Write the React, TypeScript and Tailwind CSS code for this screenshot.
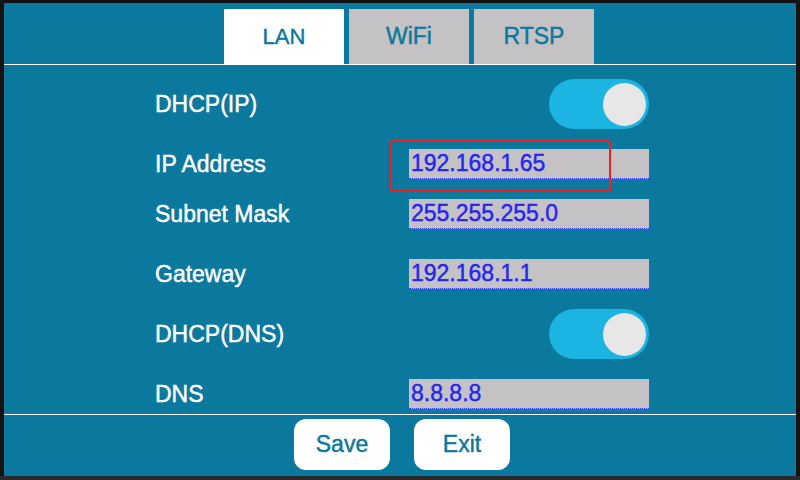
import React from "react";

const TEAL = "bg-[#0b789d]";

function Toggle() {
  return (
    <div className="w-[100px] h-[50px] rounded-full bg-[#1cb4e0] flex items-center justify-end pr-[3px]">
      <div className="w-[43px] h-[43px] rounded-full bg-[#e7e7e7]" />
    </div>
  );
}

function Field({ value }: { value: string }) {
  return (
    <div className="w-[240px] h-[30px] bg-[#c4c2c4] border-b border-dotted border-[#3a3aff] flex items-center pl-[2px] text-[23px] leading-none text-[#2626f0]">
      {value}
    </div>
  );
}

function Row({
  label,
  mt,
  h,
  children,
}: {
  label: string;
  mt: string;
  h: string;
  children: React.ReactNode;
}) {
  return (
    <div className={`flex items-center ${mt} ${h}`}>
      <div className="w-[254px] text-white text-[23px] leading-none">{label}</div>
      {children}
    </div>
  );
}

export default function App() {
  return (
    <div
      className="relative w-[800px] h-[480px] bg-[#121212] pt-[3px] px-[4px] border-b-[4px] border-[#2a2a2a] [-webkit-text-stroke:0.45px]"
      style={{ fontFamily: '"Liberation Sans", Arial, sans-serif' }}
    >
      <div className={`flex flex-col h-full ${TEAL}`}>
        <div className="flex gap-[5px] pl-[220px] pt-[6px]">
          <div className="w-[120px] h-[55px] bg-white flex items-center justify-center text-[#0b789d] text-[22px]">
            LAN
          </div>
          <div className="w-[120px] h-[55px] bg-[#c4c2c4] flex items-center justify-center text-[#0b789d] text-[23px]">
            WiFi
          </div>
          <div className="w-[120px] h-[55px] bg-[#c4c2c4] flex items-center justify-center text-[#0b789d] text-[23px]">
            RTSP
          </div>
        </div>
        <div className="h-px bg-white" />
        <div className="flex-1 flex flex-col pl-[151px]">
          <Row label="DHCP(IP)" mt="mt-[14px]" h="h-[50px]">
            <div className="w-[240px] flex justify-end">
              <Toggle />
            </div>
          </Row>
          <Row label="IP Address" mt="mt-[20px]" h="h-[30px]">
            <Field value="192.168.1.65" />
          </Row>
          <Row label="Subnet Mask" mt="mt-[20px]" h="h-[30px]">
            <Field value="255.255.255.0" />
          </Row>
          <Row label="Gateway" mt="mt-[30px]" h="h-[30px]">
            <Field value="192.168.1.1" />
          </Row>
          <Row label="DHCP(DNS)" mt="mt-[20px]" h="h-[50px]">
            <div className="w-[240px] flex justify-end">
              <Toggle />
            </div>
          </Row>
          <Row label="DNS" mt="mt-[20px]" h="h-[30px]">
            <Field value="8.8.8.8" />
          </Row>
        </div>
        <div className="h-px bg-white" />
        <div className="flex gap-[24px] pl-[290px] pt-[4px] pb-[6px]">
          <button className="w-[96px] h-[51px] rounded-[12px] bg-white text-[#0b789d] text-[23px] flex items-center justify-center">
            Save
          </button>
          <button className="w-[96px] h-[51px] rounded-[12px] bg-white text-[#0b789d] text-[23px] flex items-center justify-center">
            Exit
          </button>
        </div>
      </div>
      <div className="absolute left-[390px] top-[140px] w-[221px] h-[52px] border-2 border-[#f02020] rounded-[2px]" />
    </div>
  );
}
